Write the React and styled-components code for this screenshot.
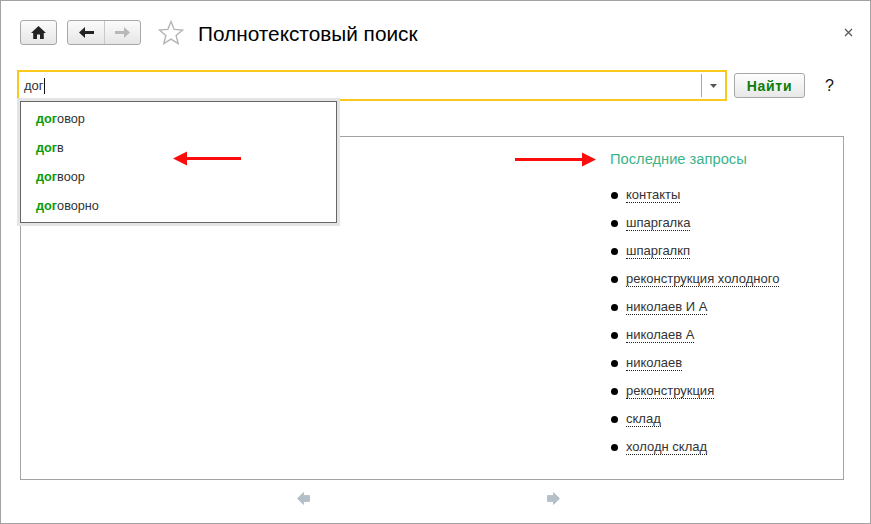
import React from 'react';
import styled, { createGlobalStyle } from 'styled-components';

const Global = createGlobalStyle`
  html, body {
    margin: 0;
    padding: 0;
    background: #fff;
  }
  * {
    box-sizing: border-box;
  }
`;

const Window = styled.div`
  position: relative;
  width: 871px;
  height: 524px;
  border: 1px solid #a3a3a3;
  padding: 19px 26px 0 19px;
  background: #fff;
  font-family: 'Liberation Sans', Arial, sans-serif;
  color: #222;
  overflow: hidden;
`;

const Header = styled.div`
  display: flex;
  align-items: center;
  height: 25px;
`;

const ToolGroup = styled.div`
  display: flex;
  height: 25px;
  margin-right: 10px;
  border: 1px solid #a8a8a8;
  border-radius: 3px;
  background: linear-gradient(#fbfbfb, #e6e6e6);
  overflow: hidden;
`;

const ToolButton = styled.div`
  display: flex;
  align-items: center;
  justify-content: center;
  width: ${(p) => p.$w}px;
  & + & {
    border-left: 1px solid #c8c8c8;
  }
`;

const StarBox = styled.div`
  display: flex;
  margin: 0 14px 0 7px;
`;

const Title = styled.div`
  flex: 1;
  font-size: 20.8px;
  line-height: 25px;
  color: #000;
  white-space: nowrap;
  padding-top: 2px;
`;

const Close = styled.div`
  display: flex;
  margin-right: -9px;
`;

const SearchRow = styled.div`
  display: flex;
  align-items: center;
  margin: 25px 0 0 -3px;
  height: 31px;
`;

const SearchBox = styled.div`
  display: flex;
  align-items: center;
  width: 710px;
  height: 31px;
  border: 2px solid #f9c91e;
  padding-left: 5px;
`;

const SearchText = styled.div`
  flex: 1;
  display: flex;
  align-items: center;
  font-size: 13px;
  color: #333;
`;

const Caret = styled.span`
  display: inline-block;
  width: 1px;
  height: 16px;
  background: #111;
`;

const DropButton = styled.div`
  display: flex;
  align-items: center;
  justify-content: center;
  width: 24px;
  height: 23px;
  border-left: 1px solid #a8a8a8;
`;

const FindButton = styled.div`
  display: flex;
  align-items: center;
  justify-content: center;
  width: 71px;
  height: 25px;
  margin-left: 7px;
  border: 1px solid #a8a8a8;
  border-radius: 3px;
  background: linear-gradient(#fdfdfd, #e8e8e8);
  color: #0a7d0a;
  font-size: 14px;
  font-weight: bold;
  letter-spacing: 0.7px;
`;

const Help = styled.div`
  margin-left: 20px;
  font-size: 16px;
  color: #111;
`;

const Suggestions = styled.div`
  position: absolute;
  left: 19px;
  top: 100px;
  width: 317px;
  height: 122px;
  padding: 3px 15px;
  border: 1px solid #666;
  background: #fff;
  box-shadow: 0 0 0 3px #e4e4e4;
  z-index: 2;
`;

const Suggestion = styled.div`
  height: 29px;
  line-height: 29px;
  font-size: 12.7px;
  color: #333;
  b {
    color: #0a9b0a;
  }
`;

const Panel = styled.div`
  display: flex;
  justify-content: flex-end;
  height: 344px;
  margin-top: 35px;
  border: 1px solid #a3a3a3;
`;

const Recent = styled.div`
  width: 233px;
  padding-top: 14px;
`;

const RecentTitle = styled.div`
  font-size: 14.7px;
  line-height: 17px;
  color: #3bb48a;
`;

const RecentList = styled.ul`
  list-style: none;
  margin: 13px 0 0 1px;
  padding: 0;
`;

const RecentItem = styled.li`
  display: flex;
  align-items: center;
  height: 28px;
  font-size: 13px;
  color: #333;
  &::before {
    content: '';
    width: 7px;
    height: 7px;
    margin-right: 8px;
    border-radius: 50%;
    background: #000;
  }
`;

const RecentLink = styled.span`
  line-height: 15px;
  border-bottom: 1px dotted #222;
`;

const Pager = styled.div`
  display: flex;
  gap: 237px;
  margin: 12px 0 0 277px;
`;

const Annotation = styled.svg`
  position: absolute;
  left: ${(p) => p.$x}px;
  top: ${(p) => p.$y}px;
  z-index: 3;
`;

const recent = [
  'контакты',
  'шпаргалка',
  'шпаргалкп',
  'реконструкция холодного',
  'николаев И А',
  'николаев А',
  'николаев',
  'реконструкция',
  'склад',
  'холодн склад',
];

const suggestions = ['овор', 'в', 'воор', 'оворно'];

const PagerArrow = ({ flip }) => (
  <svg width="13" height="13" viewBox="0 0 13 13" style={flip ? { transform: 'scaleX(-1)' } : undefined}>
    <path d="M6.5 .5 L.5 6.5 L6.5 12.5 V9.5 H12.5 V3.5 H6.5 Z" fill="#b4c0c8" stroke="#a4b0b8" strokeWidth="0.6" />
  </svg>
);

function App() {
  return (
    <Window>
      <Global />
      <Header>
        <ToolGroup>
          <ToolButton $w={35}>
            <svg width="15" height="13" viewBox="0 0 15 13">
              <path d="M7.5 0 L15 7 H12.8 V13 H9 V8.5 H6 V13 H2.2 V7 H0 Z" fill="#222" />
            </svg>
          </ToolButton>
        </ToolGroup>
        <ToolGroup>
          <ToolButton $w={36}>
            <svg width="15" height="11" viewBox="0 0 15 11">
              <path d="M6 0 L0 5.5 L6 11 V7 H15 V4 H6 Z" fill="#222" />
            </svg>
          </ToolButton>
          <ToolButton $w={36}>
            <svg width="15" height="11" viewBox="0 0 15 11">
              <path d="M9 0 L15 5.5 L9 11 V7 H0 V4 H9 Z" fill="#b8b8b8" />
            </svg>
          </ToolButton>
        </ToolGroup>
        <StarBox>
          <svg width="26" height="25" viewBox="0 0 26 25">
            <path
              d="M13 1.5 L16.2 9.4 L24.6 10 L18.1 15.4 L20.2 23.6 L13 19.1 L5.8 23.6 L7.9 15.4 L1.4 10 L9.8 9.4 Z"
              fill="#fff"
              stroke="#b4b4b4"
              strokeWidth="1.4"
            />
          </svg>
        </StarBox>
        <Title>Полнотекстовый поиск</Title>
        <Close>
          <svg width="9" height="9" viewBox="0 0 9 9">
            <path d="M1 1 L8 8 M8 1 L1 8" stroke="#555" strokeWidth="1.2" />
          </svg>
        </Close>
      </Header>

      <SearchRow>
        <SearchBox>
          <SearchText>
            дог
            <Caret />
          </SearchText>
          <DropButton>
            <svg width="7" height="4" viewBox="0 0 7 4">
              <path d="M0 0 H7 L3.5 4 Z" fill="#555" />
            </svg>
          </DropButton>
        </SearchBox>
        <FindButton>Найти</FindButton>
        <Help>?</Help>
      </SearchRow>

      <Suggestions>
        {suggestions.map((s) => (
          <Suggestion key={s}>
            <b>дог</b>
            {s}
          </Suggestion>
        ))}
      </Suggestions>

      <Panel>
        <Recent>
          <RecentTitle>Последние запросы</RecentTitle>
          <RecentList>
            {recent.map((r) => (
              <RecentItem key={r}>
                <RecentLink>{r}</RecentLink>
              </RecentItem>
            ))}
          </RecentList>
        </Recent>
      </Panel>

      <Pager>
        <PagerArrow />
        <PagerArrow flip />
      </Pager>

      <Annotation $x={172} $y={150} width="69" height="15" viewBox="0 0 69 15">
        <path d="M0 7.5 L14 0.5 V6 H68 V9 H14 V14.5 Z" fill="#fb0d0d" />
      </Annotation>
      <Annotation $x={514} $y={151} width="82" height="15" viewBox="0 0 82 15">
        <path d="M81 7.5 L67 0.5 V6 H0 V9 H67 V14.5 Z" fill="#fb0d0d" />
      </Annotation>
    </Window>
  );
}

export default App;
